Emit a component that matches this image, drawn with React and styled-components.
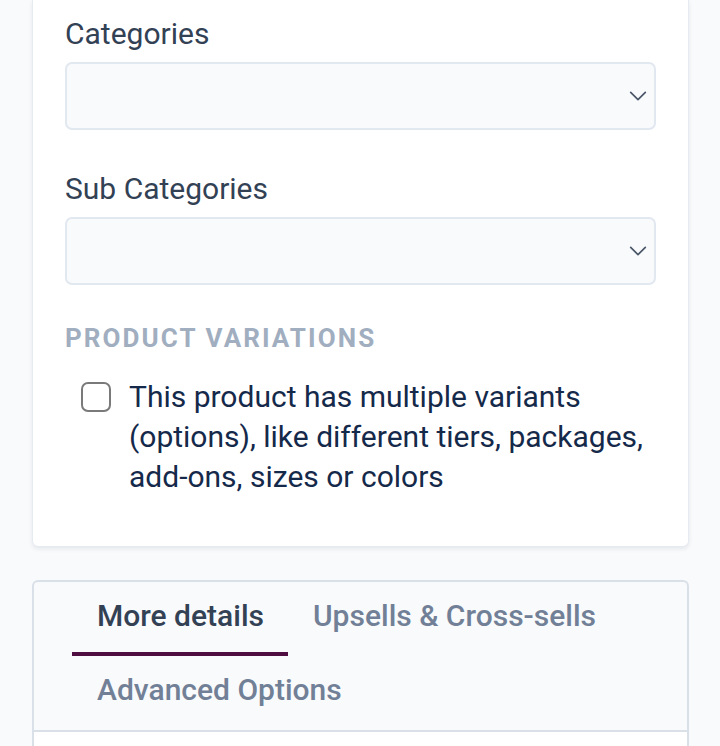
import styled, { createGlobalStyle } from "styled-components"

const GlobalStyle = createGlobalStyle`
	body {
		margin: 0;
		background: #f8fafc;
		font-family: Roboto, "Liberation Sans", sans-serif;
	}
`

const Page = styled.div`
	padding: 0 31px 0 32px;
	display: flex;
	flex-direction: column;
	gap: 33px;
`

const Card = styled.div`
	background: #ffffff;
	border: 1px solid #e6ebf1;
	border-top: none;
	border-radius: 0 0 6px 6px;
	box-shadow: 0 2px 4px rgba(15, 23, 42, 0.08);
	padding: 14px 32px 49px 32px;
`

const Field = styled.div`
	display: flex;
	flex-direction: column;
	gap: 8px;
	margin-bottom: 39px;
`

const Label = styled.label`
	font-size: 30px;
	line-height: 40px;
	color: #334155;
`

const SelectBox = styled.div`
	height: 64px;
	border: 2px solid #e2e8f0;
	border-radius: 7px;
	background: #f8fafc;
	display: flex;
	align-items: center;
	justify-content: flex-end;
	padding-right: 5px;
`

const SectionTitle = styled.div`
	font-size: 26px;
	font-weight: 700;
	letter-spacing: 0.08em;
	color: #a0aec0;
	line-height: 40px;
	margin-top: -6px;
	margin-bottom: 19px;
`

const CheckRow = styled.label`
	display: flex;
	align-items: flex-start;
	gap: 18px;
	padding-left: 16px;
`

const Box = styled.span`
	flex: none;
	width: 26px;
	height: 26px;
	margin-top: 5px;
	border: 2px solid #7a7a7a;
	border-radius: 7px;
	background: #fff;
`

const CheckText = styled.span`
	font-size: 30px;
	line-height: 40px;
	color: #15294a;
`

const TabCard = styled.div`
	background: #f8fafc;
	border: 2px solid #d9e0e7;
	border-bottom: none;
	border-radius: 6px 6px 0 0;
`

const TabList = styled.div`
	display: flex;
	flex-wrap: wrap;
	padding: 0 38px;
	border-bottom: 2px solid #d9e0e7;
`

const Tab = styled.div`
	padding: 14px 24px 16px 25px;
	font-size: 30px;
	line-height: 40px;
	font-weight: 500;
	color: ${p => (p.active ? "#334155" : "#718096")};
	border-bottom: 4px solid ${p => (p.active ? "#4f0e3f" : "transparent")};
`

const TabBody = styled.div`
	background: #ffffff;
	height: 40px;
`

const Chevron = () => (
	<svg width="22" height="22" viewBox="0 0 24 24" fill="none" stroke="#4a5568" strokeWidth="1.8" strokeLinecap="round" strokeLinejoin="round">
		<polyline points="4 8 12 16 20 8" />
	</svg>
)

const Select = ({ label }) => (
	<Field>
		<Label>{label}</Label>
		<SelectBox>
			<Chevron />
		</SelectBox>
	</Field>
)

const App = () => {
	return (
		<>
			<GlobalStyle />
			<Page>
				<Card>
					<Select label="Categories" />
					<Select label="Sub Categories" />
					<SectionTitle>PRODUCT VARIATIONS</SectionTitle>
					<CheckRow>
						<Box />
						<CheckText>
							This product has multiple variants (options), like different tiers, packages, add-ons, sizes or colors
						</CheckText>
					</CheckRow>
				</Card>
				<TabCard>
					<TabList>
						<Tab active>More details</Tab>
						<Tab>Upsells &amp; Cross-sells</Tab>
						<Tab>Advanced Options</Tab>
					</TabList>
					<TabBody />
				</TabCard>
			</Page>
		</>
	)
}

export default App
